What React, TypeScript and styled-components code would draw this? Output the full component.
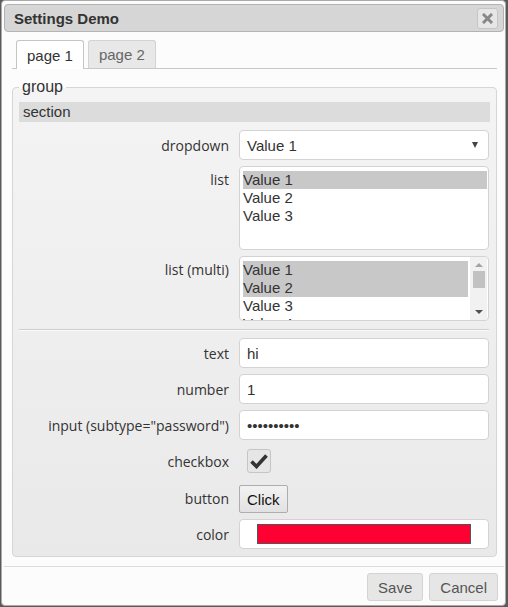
import React from 'react';
import styled, { createGlobalStyle } from 'styled-components';

const GlobalStyle = createGlobalStyle`
  html, body { margin: 0; padding: 0; background: #5a5a5a; }
  body { font-family: "Liberation Sans", Arial, sans-serif; }
  * { box-sizing: border-box; }
`;

const Dialog = styled.div`
  margin-left: 1px;
  width: 505px;
  height: 606px;
  background: #fcfcfc;
  border: 1px solid #aaa;
  border-radius: 4px;
  padding: 3px 1px 3px 2px;
  display: flex;
  flex-direction: column;
`;

const TitleBar = styled.div`
  flex: none;
  height: 28px;
  background: #d6d6d6;
  border: 1px solid #b3b3b3;
  border-radius: 4px;
  display: flex;
  align-items: center;
  justify-content: space-between;
  padding: 0 5px 0 9px;
`;

const Title = styled.span`
  font-weight: bold;
  font-size: 15px;
  color: #333;
`;

const CloseBtn = styled.div`
  width: 21px;
  height: 21px;
  border: 1px solid #c5c5c5;
  border-radius: 3px;
  background: #e6e6e6;
  display: flex;
  align-items: center;
  justify-content: center;
`;

const Content = styled.div`
  flex: 1;
  min-height: 0;
  padding: 8px 7px 0 8px;
  display: flex;
  flex-direction: column;
`;

const TabNav = styled.div`
  display: flex;
  gap: 4px;
  padding-left: 4px;
  border-bottom: 1px solid #c8c8c8;
`;

const Tab = styled.div<{ $active?: boolean }>`
  padding: 0 10px;
  display: flex;
  align-items: center;
  font-size: 15px;
  color: ${(p) => (p.$active ? '#333' : '#666')};
  background: ${(p) => (p.$active ? '#fff' : '#e8e8e8')};
  border: 1px solid ${(p) => (p.$active ? '#c5c5c5' : '#d3d3d3')};
  border-bottom: none;
  border-radius: 3px 3px 0 0;
  margin-bottom: ${(p) => (p.$active ? '-1px' : '0')};
  height: ${(p) => (p.$active ? '29px' : '28px')};
`;

const Group = styled.fieldset`
  margin: 9px 0 0 0;
  padding: 6px 6px 7px 6px;
  border: 1px solid #d6d6d6;
  border-radius: 4px;
  background: linear-gradient(#f4f4f4, #e9e9e9);
  min-width: 0;
`;

const Legend = styled.legend`
  padding: 0 3px;
  font-size: 16px;
  color: #333;
`;

const Section = styled.div`
  height: 20px;
  background: #dcdcdc;
  font-size: 15px;
  color: #333;
  padding-left: 4px;
  line-height: 20px;
  margin-bottom: 8px;
`;

const Form = styled.div`
  display: grid;
  grid-template-columns: 210px 250px;
  column-gap: 10px;
  row-gap: 6px;
  align-items: center;
`;

const Label = styled.div<{ $top?: boolean }>`
  font-family: "Open Sans", sans-serif;
  font-size: 14px;
  color: #333;
  text-align: right;
  align-self: ${(p) => (p.$top ? 'start' : 'center')};
  padding-top: ${(p) => (p.$top ? '4px' : '0')};
`;

const Field = styled.div`
  height: 30px;
  background: #fff;
  border: 1px solid #d3d3d3;
  border-radius: 4px;
  display: flex;
  align-items: center;
  padding: 0 7px;
  font-size: 15px;
  color: #333;
`;

const Arrow = styled.span`
  margin-left: auto;
  margin-right: 3px;
  width: 0;
  height: 0;
  border-left: 3.5px solid transparent;
  border-right: 3.5px solid transparent;
  border-top: 6px solid #444;
`;

const ListBox = styled.div<{ $h: number }>`
  height: ${(p) => p.$h}px;
  background: #fff;
  border: 1px solid #d3d3d3;
  border-radius: 4px;
  padding: 4px 1px 0 3px;
  overflow: hidden;
  display: flex;
  font-size: 15px;
  color: #333;
`;

const Items = styled.div`
  flex: 1;
`;

const Item = styled.div<{ $sel?: boolean }>`
  height: 18px;
  line-height: 18px;
  background: ${(p) => (p.$sel ? '#c8c8c8' : 'transparent')};
`;

const ScrollBar = styled.div`
  width: 17px;
  margin: -4px 0 0 2px;
  background: #f1f1f1;
  display: flex;
  flex-direction: column;
  align-items: center;
`;

const ScrollArrow = styled.span<{ $down?: boolean }>`
  width: 0;
  height: 0;
  border-left: 4px solid transparent;
  border-right: 4px solid transparent;
  ${(p) => (p.$down ? 'border-top: 4px solid #505050;' : 'border-bottom: 4px solid #a3a3a3;')}
`;

const ArrowGap = styled.span`
  height: 6px;
  flex: none;
`;

const Thumb = styled.div`
  width: 12px;
  height: 17px;
  background: #c1c1c1;
  margin: 4px 0 auto;
`;

const Divider = styled.hr`
  grid-column: 1 / -1;
  margin: 2px 0 1px;
  border: none;
  border-top: 1px solid #cfcfcf;
  border-bottom: 1px solid #fafafa;
`;

const Dots = styled.span`
  font-size: 15px;
  color: #333;
`;

const CheckBox = styled.div`
  margin: 3px 0 4px 8px;
  width: 24px;
  height: 24px;
  border: 1px solid #c5c5c5;
  border-radius: 3px;
  background: #e6e6e6;
  display: flex;
  align-items: center;
  justify-content: center;
`;

const CtlButton = styled.button`
  justify-self: start;
  margin-top: 2px;
  height: 28px;
  padding: 0 7px;
  font-family: "Liberation Sans", Arial, sans-serif;
  font-size: 15px;
  color: #111;
  background: linear-gradient(#f2f2f2, #e2e2e2);
  border: 1px solid #adadad;
  border-radius: 2px;
`;

const Swatch = styled.div`
  flex: 1;
  margin: 0 10px;
  height: 20px;
  background: #ff0033;
  border: 1px solid #555;
`;

const Footer = styled.div`
  flex: none;
  border-top: 1px solid #dcdcdc;
  margin-top: 7px;
  padding: 6px 6px 1px 0;
  display: flex;
  justify-content: flex-end;
  gap: 6px;
`;

const FootButton = styled.button`
  height: 28px;
  padding: 0 10px;
  font-family: "Liberation Sans", Arial, sans-serif;
  font-size: 15px;
  color: #555;
  background: #e6e6e6;
  border: 1px solid #d3d3d3;
  border-radius: 3px;
`;

export default function App() {
  return (
    <>
      <GlobalStyle />
      <Dialog>
        <TitleBar>
          <Title>Settings Demo</Title>
          <CloseBtn>
            <svg width="11" height="11" viewBox="0 0 11 11">
              <path d="M2 2 L9 9 M9 2 L2 9" stroke="#888" strokeWidth="3" strokeLinecap="square" />
            </svg>
          </CloseBtn>
        </TitleBar>
        <Content>
          <TabNav>
            <Tab $active>page 1</Tab>
            <Tab>page 2</Tab>
          </TabNav>
          <Group>
            <Legend>group</Legend>
            <Section>section</Section>
            <Form>
              <Label>dropdown</Label>
              <Field>
                Value 1
                <Arrow />
              </Field>

              <Label $top>list</Label>
              <ListBox $h={84}>
                <Items>
                  <Item $sel>Value 1</Item>
                  <Item>Value 2</Item>
                  <Item>Value 3</Item>
                </Items>
              </ListBox>

              <Label $top>list (multi)</Label>
              <ListBox $h={65}>
                <Items>
                  <Item $sel>Value 1</Item>
                  <Item $sel>Value 2</Item>
                  <Item>Value 3</Item>
                  <Item>Value 4</Item>
                </Items>
                <ScrollBar>
                  <ArrowGap />
                  <ScrollArrow />
                  <Thumb />
                  <ScrollArrow $down />
                  <ArrowGap />
                </ScrollBar>
              </ListBox>

              <Divider />

              <Label>text</Label>
              <Field>hi</Field>

              <Label>number</Label>
              <Field>1</Field>

              <Label>input (subtype="password")</Label>
              <Field>
                <Dots>••••••••••</Dots>
              </Field>

              <Label>checkbox</Label>
              <CheckBox>
                <svg width="18" height="16" viewBox="0 0 18 16">
                  <path d="M1.5 8.5 L6.5 13.5 L16.5 2.5" stroke="#333" strokeWidth="3.6" fill="none" />
                </svg>
              </CheckBox>

              <Label>button</Label>
              <CtlButton>Click</CtlButton>

              <Label>color</Label>
              <Field>
                <Swatch />
              </Field>
            </Form>
          </Group>
        </Content>
        <Footer>
          <FootButton>Save</FootButton>
          <FootButton>Cancel</FootButton>
        </Footer>
      </Dialog>
    </>
  );
}
